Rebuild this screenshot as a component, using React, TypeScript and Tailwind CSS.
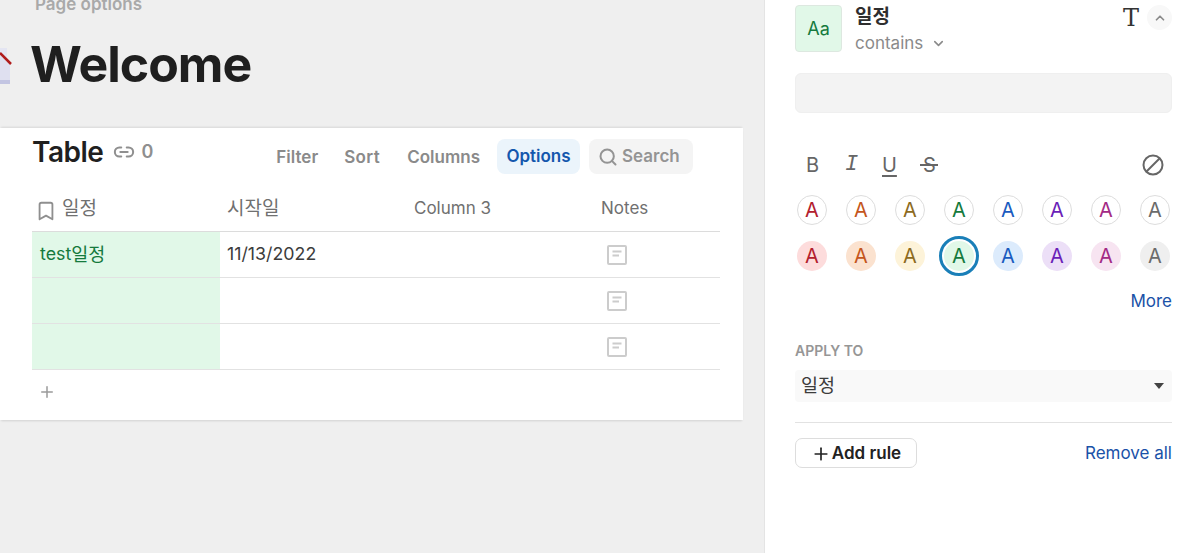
import React from 'react';
import { Bookmark, Link2, Search, ChevronDown, ChevronUp, Plus } from 'lucide-react';

const COLORS = [
  { text: 'text-[#b3202e]', bg: 'bg-[#fddcdc]' },
  { text: 'text-[#c4561d]', bg: 'bg-[#fbe2cf]' },
  { text: 'text-[#8d6b1f]', bg: 'bg-[#fdf3d9]' },
  { text: 'text-[#157a3d]', bg: 'bg-[#e1f8e8]' },
  { text: 'text-[#1a5bbf]', bg: 'bg-[#dcebfc]' },
  { text: 'text-[#6a1fb8]', bg: 'bg-[#ecdff7]' },
  { text: 'text-[#a32a85]', bg: 'bg-[#f7e4f1]' },
  { text: 'text-[#6b6b6b]', bg: 'bg-[#efefef]' },
];

const NotesIcon = () => (
  <svg width="20" height="20" viewBox="0 0 20 20" fill="none" stroke="#cccccc" strokeWidth="2">
    <rect x="1" y="1" width="18" height="18" rx="1" />
    <path d="M5.5 6.5h9M5.5 10.5h6.5" />
  </svg>
);

const Row = ({ first, children }: { first?: React.ReactNode; children?: React.ReactNode }) => (
  <div className="flex h-[46px] border-b border-[#e2e2e2]">
    <div className="flex w-[188px] items-center bg-[#e1f8e8] pl-2 text-[17.8px] text-[#157a3d]">{first}</div>
    <div className="flex w-[187px] items-center pl-[7px] text-[17.8px] text-[#3c3c3c]">{children}</div>
    <div className="w-[187px]" />
    <div className="flex items-center pl-[13px]">
      <NotesIcon />
    </div>
  </div>
);

export default function App() {
  return (
    <div className="flex h-[553px] w-[1191px] overflow-hidden bg-white font-['Inter','Noto_Sans_CJK_KR',sans-serif]">
      {/* page area */}
      <div className="h-full w-[765px] shrink-0 border-r border-[#e4e4e4] bg-[#efefef]">
        <div className="-mt-[8px] pl-[35px] text-[17px] leading-[24px] font-semibold text-[#a9a9a9]">Page options</div>
        <div className="relative mt-[16px] h-[64px] pl-[30px] text-[50px] leading-[64px] font-bold tracking-[-1px] text-[#1f1f1f]">
          Welcome
          <svg className="absolute top-[16px] left-0" width="12" height="36" viewBox="0 0 12 36">
            <path d="M0 0H7V10L0 5Z" fill="#e4e5f2" />
            <path d="M0 5L10 16V36H0Z" fill="#dfe0f0" />
            <path d="M0 32H10V36H0Z" fill="#c3c5e2" />
            <path d="M0 5L11 16" stroke="#b01c1c" strokeWidth="2.5" fill="none" />
          </svg>
        </div>

        {/* table card */}
        <div className="mt-[32px] h-[292px] w-[743px] bg-white pl-[32px] shadow-[0_2px_2px_-1px_rgba(0,0,0,0.12),0_-2px_2px_-1px_rgba(0,0,0,0.1)]">
          <div className="flex h-[59px] w-[661px] items-start">
            <div className="mt-[6px] text-[28px] leading-[36px] font-semibold tracking-[-0.5px] text-[#1f1f1f]">Table</div>
            <Link2 className="mt-[13px] ml-[10px] text-[#8f8f8f]" size={22} strokeWidth={2.2} />
            <div className="mt-[12px] ml-[6px] text-[18px] leading-[24px] font-semibold text-[#8f8f8f]">0</div>
            <div className="mt-[11px] ml-auto flex items-center text-[17px] font-semibold text-[#8a8a8a]">
              <span className="mt-[2px] mr-[26px]">Filter</span>
              <span className="mt-[2px] mr-[27px] tracking-[0.4px]">Sort</span>
              <span className="mt-[2px] mr-[17px]">Columns</span>
              <span className="mr-[9px] flex h-[35px] w-[83px] items-center justify-center rounded-[8px] bg-[#ebf4fb] pt-[1px] text-[#1457ad]">Options</span>
              <span className="flex h-[35px] w-[104px] items-center gap-[4px] rounded-[8px] bg-[#f4f4f4] pt-[1px] pl-[9px] text-[#949494]">
                <Search size={20} strokeWidth={2.4} />
                Search
              </span>
            </div>
          </div>

          <div className="w-[688px]">
            <div className="flex h-[45px] items-center border-b border-[#dcdcdc] text-[17px] text-[#707070]">
              <div className="flex w-[195px] items-center pl-[3px] text-[19px]">
                <Bookmark className="mt-[3px] mr-[5px] text-[#8f8f8f]" size={22} strokeWidth={2} />
                일정
              </div>
              <div className="w-[187px] text-[19px]">시작일</div>
              <div className="w-[187px]">Column 3</div>
              <div>Notes</div>
            </div>
            <Row first={<>test<span className="text-[18.5px]">일정</span></>}>11/13/2022</Row>
            <Row />
            <Row />
            <Plus className="mt-[13px] ml-[6px] text-[#9a9a9a]" size={18} strokeWidth={2} />
          </div>
        </div>
      </div>

      {/* rule panel */}
      <div className="w-[426px] pt-[5px] pl-[30px]">
        <div className="w-[377px]">
          <div className="flex h-[47px] items-start">
            <div className="flex h-[47px] w-[47px] items-center justify-center rounded-[4px] border border-[#dde8e0] bg-[#e1f8e8] text-[18px] text-[#157a3d]">Aa</div>
            <div className="ml-[13px] pt-[1px]">
              <div className="text-[19px] leading-[22px] font-bold text-[#2e2e2e]">일정</div>
              <div className="mt-[4px] flex items-center text-[17px] leading-[22px] text-[#8a8a8a]">
                contains
                <ChevronDown className="mt-[1px] ml-[8px]" size={15} strokeWidth={2.5} />
              </div>
            </div>
            <div className="ml-auto flex items-center">
              <span className="mr-[8px] font-['DejaVu_Serif',serif] text-[24px] leading-[24px] text-[#333333]">T</span>
              <span className="flex h-[25px] w-[25px] items-center justify-center rounded-full bg-[#f8f8f8] text-[#8a8a8a]">
                <ChevronUp size={14} strokeWidth={3} />
              </span>
            </div>
          </div>

          <div className="mt-[21px] h-[40px] rounded-[6px] border border-[#efefef] bg-[#f3f3f3]" />

          <div className="mt-[40px] flex h-[24px] items-center pl-[11px] text-[20px] leading-[24px] text-[#666666]">
            <span className="w-[39px]">B</span>
            <span className="w-[37px] font-['Liberation_Mono',monospace] text-[22px] italic">I</span>
            <span className="w-[41px] underline decoration-2 underline-offset-[3px]">U</span>
            <span className="relative">
              S
              <span className="absolute top-[11px] -left-[3px] h-[2px] w-[18px] bg-[#666666]" />
            </span>
            <svg className="mr-[8px] ml-auto" width="22" height="22" viewBox="0 0 22 22" fill="none" stroke="#666666" strokeWidth="2">
              <circle cx="11" cy="11" r="9.5" />
              <path d="M17.5 4.5L4.5 17.5" />
            </svg>
          </div>

          <div className="mt-[18px] flex justify-between px-[2px]">
            {COLORS.map((c, i) => (
              <span key={i} className={`flex h-[30px] w-[30px] items-center justify-center rounded-full border border-[#dddddd] text-[20px] ${c.text}`}>A</span>
            ))}
          </div>
          <div className="mt-[16px] flex justify-between px-[2px]">
            {COLORS.map((c, i) => (
              <span key={i} className={`flex h-[30px] w-[30px] items-center justify-center rounded-full text-[20px] ${c.bg} ${c.text} ${i === 3 ? 'outline-[3px] outline-offset-[2px] outline-[#1a7fb8]' : ''}`}>A</span>
            ))}
          </div>

          <div className="mt-[18px] text-right text-[17px] leading-[24px] text-[#1a52a8]">More</div>

          <div className="mt-[28px] text-[14px] leading-[20px] font-semibold text-[#969696]">APPLY TO</div>
          <div className="mt-[9px] flex h-[32px] items-center justify-between rounded-[4px] bg-[#f9f9f9] pr-[7px] pl-[6px] text-[18.5px] text-[#3c3c3c]">
            일정
            <svg width="12" height="6" viewBox="0 0 12 6">
              <path d="M1 0H11L6 6Z" fill="#444444" />
            </svg>
          </div>

          <div className="mt-[20px] border-t border-[#e2e2e2] pt-[15px]">
            <div className="flex items-center justify-between">
              <div className="flex h-[30px] w-[122px] items-center justify-center gap-[1px] rounded-[7px] border border-[#dddddd] pt-[2px] text-[17px] font-semibold text-[#222222]">
                <Plus size={20} strokeWidth={2} />
                Add rule
              </div>
              <div className="pt-[2px] text-[17px] text-[#1a52a8]">Remove all</div>
            </div>
          </div>
        </div>
      </div>
    </div>
  );
}
